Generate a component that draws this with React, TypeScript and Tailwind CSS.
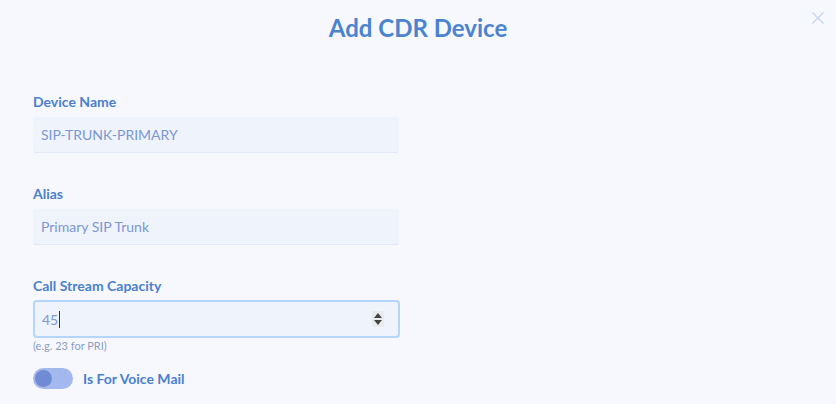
import React from "react";

function Field({ label, value }: { label: string; value: string }) {
  return (
    <div className="flex flex-col">
      <label className="text-[14px] font-bold text-[#4a80cd] leading-[20px] mb-[5px]">{label}</label>
      <div className="w-[366px] h-[36px] bg-[#eff3fc] rounded-[3px] border-b border-[#e2e8f5] flex items-center px-[8px] text-[14px] text-[#7c98d3]">
        {value}
      </div>
    </div>
  );
}

export default function App() {
  return (
    <div
      className="w-[836px] h-[404px] bg-[#f7f8fd] relative overflow-hidden"
      style={{ fontFamily: "Lato, 'Noto Sans', sans-serif" }}
    >
      <button className="absolute right-[11px] top-[11px] text-[#c5d3ee] text-[18px] leading-none">
        <svg width="14" height="14" viewBox="0 0 14 14">
          <path d="M1.5 1.5 L12.5 12.5 M12.5 1.5 L1.5 12.5" stroke="#c8d5ef" strokeWidth="1.4" />
        </svg>
      </button>
      <h1 className="text-center text-[24px] font-bold text-[#4a83d0] pt-[12px] leading-[32px]">Add CDR Device</h1>
      <div className="px-[33px] pt-[48px] flex flex-col">
        <Field label="Device Name" value="SIP-TRUNK-PRIMARY" />
        <div className="h-[31px]" />
        <Field label="Alias" value="Primary SIP Trunk" />
        <div className="h-[31px]" />
        <div className="flex flex-col">
          <label className="text-[14px] font-bold text-[#4a80cd] leading-[20px] mb-[4px]">Call Stream Capacity</label>
          <div className="w-[367px] h-[38px] bg-[#eff3fc] rounded-[4px] border-2 border-[#b5d5fb] flex items-center pl-[7px] pr-[14px] text-[14px] text-[#7c98d3]">
            <span>45</span>
            <span className="w-[1px] h-[17px] bg-[#333] ml-[1px]" />
            <span className="ml-auto w-[12px] h-[16px] bg-[#e9ebef] flex flex-col items-center justify-center gap-[2px]">
              <svg width="8" height="5" viewBox="0 0 8 5"><path d="M4 0 L8 5 L0 5 Z" fill="#444" /></svg>
              <svg width="8" height="5" viewBox="0 0 8 5"><path d="M0 0 L8 0 L4 5 Z" fill="#444" /></svg>
            </span>
          </div>
          <div className="text-[11px] text-[#8a9ec6] leading-[14px] mt-[1px]">(e.g. 23 for PRI)</div>
          <div className="flex items-center mt-[15px]">
            <div className="w-[40px] h-[21px] rounded-full bg-[#a3b8ec] flex items-center px-[2px]">
              <div className="w-[17px] h-[17px] rounded-full bg-[#6e8bd3]" />
            </div>
            <span className="ml-[10px] text-[14px] font-bold text-[#4a80cd]">Is For Voice Mail</span>
          </div>
        </div>
      </div>
    </div>
  );
}
